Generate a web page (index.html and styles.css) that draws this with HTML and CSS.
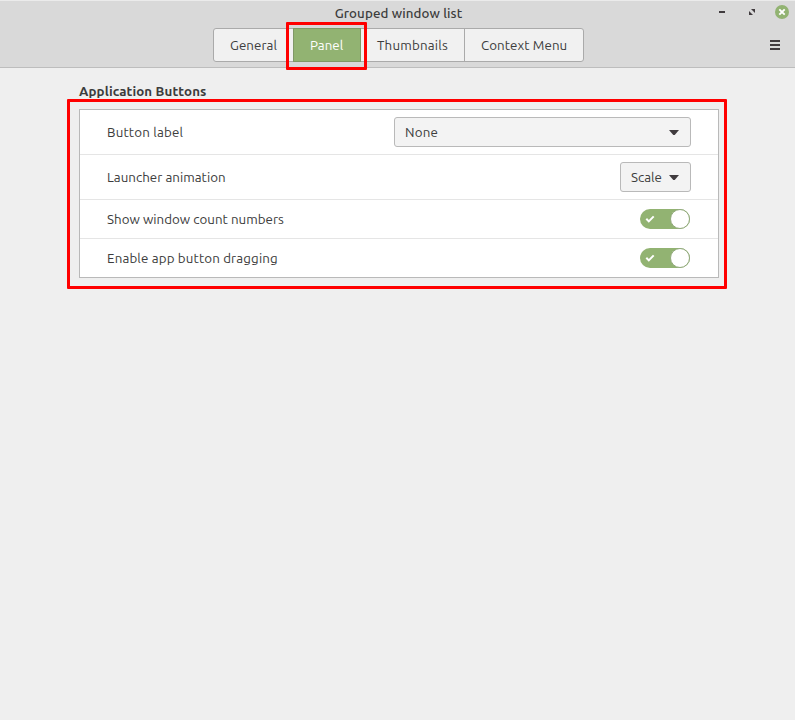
FILE: index.html
```html
<!DOCTYPE html>
<html lang="en">
<head>
<meta charset="utf-8">
<title>Grouped window list</title>
<link rel="stylesheet" href="styles.css">
</head>
<body>
<header class="header">
  <div class="titlebar">
    <h1 class="title"><span class="t-title">Grouped window list</span></h1>
    <div class="controls">
      <svg width="10" height="14" viewBox="0 0 10 14"><path d="M4 6h6v2H4z" fill="#403b3e"/></svg>
      <svg width="10" height="14" viewBox="0 0 10 14"><path d="M6 4h4v4zM4 6v4h4z" fill="#403b3e"/></svg>
      <svg width="14" height="14" viewBox="0 0 14 14"><circle cx="7" cy="7" r="7" fill="#92b372"/><path d="M4.3 4.3l5.4 5.4m0-5.4l-5.4 5.4" stroke="#fff" stroke-width="1.9"/></svg>
    </div>
  </div>
  <div class="toolbar">
    <nav class="tabs">
      <button class="tab general"><span class="t-general">General</span></button>
      <button class="tab panel active"><span class="t-panel">Panel</span></button>
      <button class="tab thumbs"><span class="t-thumbs">Thumbnails</span></button>
      <button class="tab context"><span class="t-context">Context Menu</span></button>
      <i class="mark mark-tab"></i>
    </nav>
    <svg class="menu" width="10" height="10" viewBox="0 0 10 10"><path d="M0 0h10v2H0zM0 4h10v2H0zM0 8h10v2H0z" fill="#403b3e"/></svg>
  </div>
</header>
<main class="content">
  <h2 class="heading"><span class="t-heading">Application Buttons</span></h2>
  <section class="list">
    <div class="row tall"><span class="t-label">Button label</span>
      <button class="combo wide"><span class="t-none">None</span><svg width="10" height="5" viewBox="0 0 10 5"><path d="M0 0h10L5.7 5H4.3z" fill="#403b3e"/></svg></button></div>
    <div class="row tall"><span class="t-launcher">Launcher animation</span>
      <button class="combo"><span class="t-scale">Scale</span><svg width="10" height="5" viewBox="0 0 10 5"><path d="M0 0h10L5.7 5H4.3z" fill="#403b3e"/></svg></button></div>
    <div class="row"><span class="t-count">Show window count numbers</span>
      <div class="switch"><svg width="10" height="8" viewBox="0 0 10 8"><path d="M1.3 3.8l2.5 2.6L8.7 1.4" fill="none" stroke="#fff" stroke-width="2"/></svg><i class="knob"></i></div></div>
    <div class="row"><span class="t-drag">Enable app button dragging</span>
      <div class="switch"><svg width="10" height="8" viewBox="0 0 10 8"><path d="M1.3 3.8l2.5 2.6L8.7 1.4" fill="none" stroke="#fff" stroke-width="2"/></svg><i class="knob"></i></div></div>
    <i class="mark mark-list"></i>
  </section>
</main>
</body>
</html>
```
FILE: styles.css
```css
* { box-sizing: border-box; }
body {
  margin: 0;
  height: 720px;
  overflow: hidden;
  background: #efefef;
  color: #3c3c3c;
  font: 13.333px/18px Ubuntu, "Noto Sans", sans-serif;
}
h1, h2 { margin: 0; font-size: 13.333px; line-height: 20px; }
span { white-space: nowrap; }
svg { display: block; flex: none; }
button { font: inherit; color: inherit; margin: 0; }

.t-title { letter-spacing: 0.11px; }
.t-general { letter-spacing: 0.07px; }
.t-thumbs { letter-spacing: 0.2px; }
.t-context { letter-spacing: 0.08px; }
.t-heading { letter-spacing: 0.13px; }
.t-label { letter-spacing: 0.18px; }
.t-launcher { letter-spacing: 0.03px; }
.t-count { letter-spacing: 0.03px; }
.t-drag { letter-spacing: 0.15px; }
.t-none { letter-spacing: 0.2px; }

.header {
  height: 68px;
  background: #d9d9d9;
  border-top: 1px solid #ebebeb;
  border-bottom: 1px solid #bdbdbd;
}
.titlebar {
  display: grid;
  grid-template-columns: 1fr auto 1fr;
  height: 27px;
  padding: 3px 6px 0 8px;
}
.title { grid-column: 2; font-weight: 500; }
.controls {
  display: flex;
  justify-content: flex-end;
  gap: 20px;
  padding-top: 1px;
}
.toolbar {
  display: grid;
  grid-template-columns: 198px 371px 1fr;
  align-items: center;
  height: 34px;
  padding: 0 15px;
}
.tabs {
  position: relative;
  grid-column: 2;
  display: flex;
  height: 34px;
  border: 1px solid #aaa;
  border-radius: 3px;
  background: #f1f1f1;
}
.tab {
  display: flex;
  align-items: center;
  justify-content: flex-start;
  padding: 0 0 0 16px;
  border: 0;
  background: none;
}
.tab span, .row span { padding-top: 2px; }
.general { width: 79px; }
.panel { width: 68px; margin: -1px 0; border: 1px solid #809867; }
.active { background: #92b372; color: #fff; }
.thumbs { width: 104px; border-right: 1px solid #aaa; }
.context { width: 118px; }
.menu { justify-self: end; }

.content { padding: 14px 76px 0 79px; }
.heading { height: 27px; font-weight: 700; }
.list {
  position: relative;
  width: 640px;
  background: #fff;
  border: 1px solid #b9b9b9;
}
.row {
  display: flex;
  align-items: center;
  justify-content: space-between;
  height: 39px;
  padding: 0 28px 0 27px;
  border-bottom: 1px solid #e5e5e5;
}
.row:nth-of-type(4) { height: 38px; border-bottom: 0; }
.tall { height: 45px; padding-right: 27px; }
.combo {
  display: flex;
  align-items: center;
  justify-content: space-between;
  width: 71px;
  height: 30px;
  padding: 0 11px 0 10px;
  border: 1px solid #b9b9b9;
  border-radius: 3px;
  background: #f3f3f3;
}
.wide { width: 297px; }
.switch {
  display: flex;
  align-items: center;
  justify-content: space-between;
  width: 50px;
  height: 20px;
  padding-left: 5px;
  border-radius: 10px;
  background: #92b372;
}
.knob {
  width: 20px;
  height: 20px;
  border: 1px solid #92a97c;
  border-radius: 50%;
  background: #fff;
}
.mark { position: absolute; border: 3px solid #f00; border-radius: 1px; pointer-events: none; }
.mark-tab { left: 72px; top: -7px; width: 81px; height: 48px; }
.mark-list { left: -13px; top: -11px; width: 660px; height: 190px; }
```
